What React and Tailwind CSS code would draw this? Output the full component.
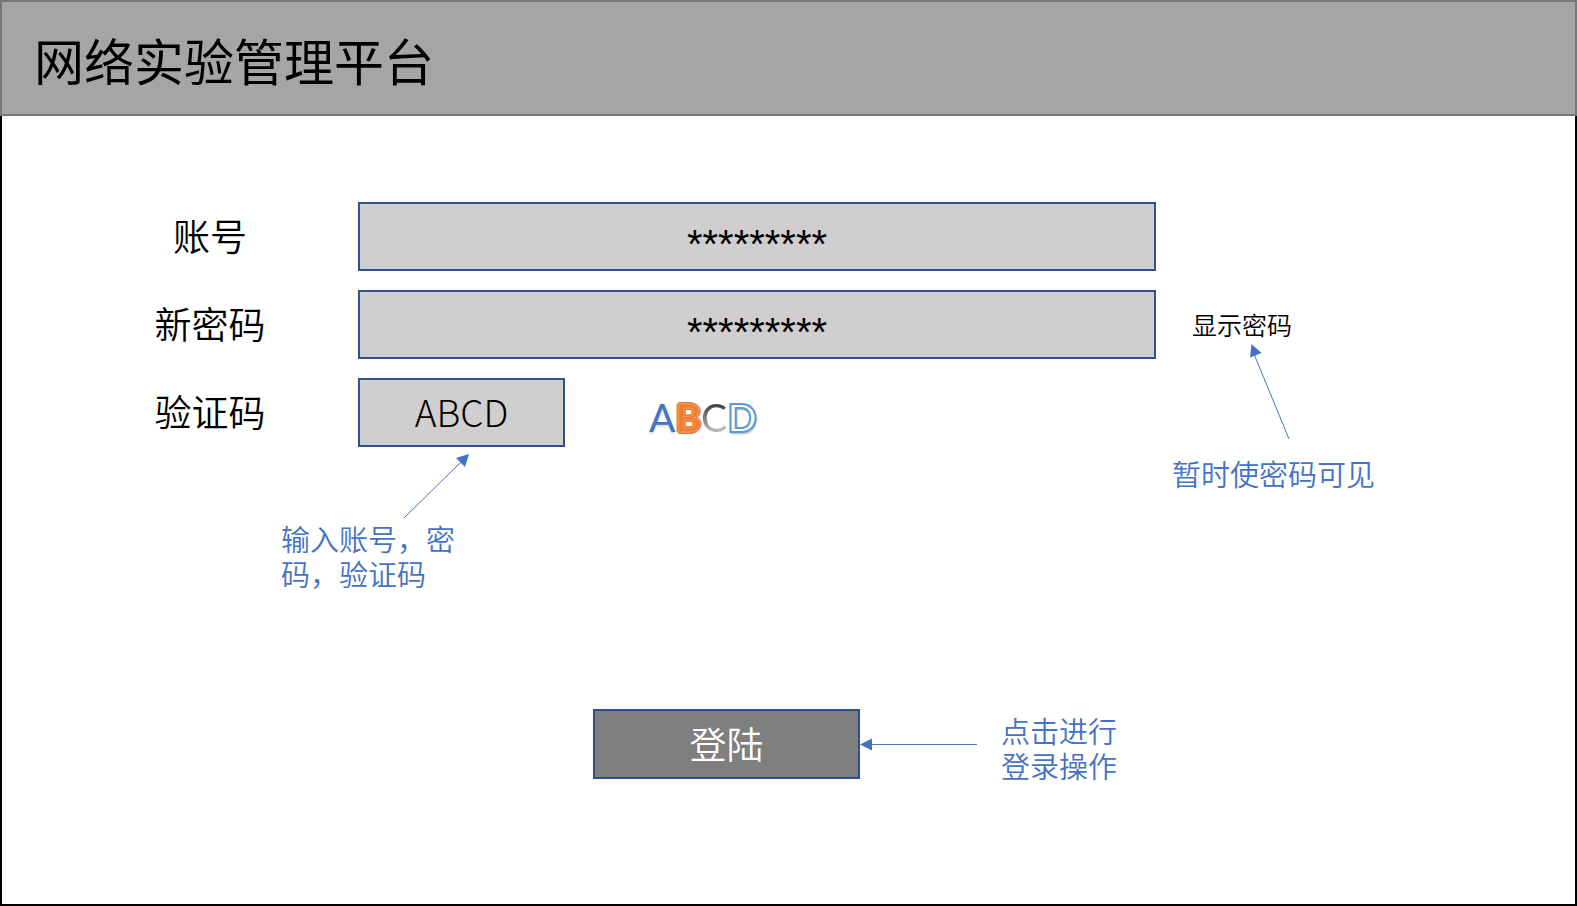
const field =
  "col-start-2 h-[69px] border-2 border-[#2f528f] bg-[#d0cece] px-4 text-center leading-none text-black outline-none";
const masked = "pt-4 font-['Liberation_Sans',sans-serif] text-[40px] font-normal";
const note = "text-[29px] leading-[35px] text-[#4472c4]";

function Label({ id, children }) {
  return (
    <label htmlFor={id} className="col-start-1 flex items-center justify-center pb-0.5 pl-15 text-[37px] leading-none">
      {children}
    </label>
  );
}

function Captcha() {
  return (
    <div aria-label="验证码图片" className="flex items-center pt-2.5 font-['Lato',sans-serif] text-[39px] leading-none">
      <span className="font-normal text-[#4472c4] [text-shadow:0_2px_2px_rgba(0,0,0,0.15)]">A</span>
      <span className="font-bold text-[#ed7d31] [-webkit-text-stroke:1px_#f19a5e] [text-shadow:2px_0_#ed7d31,-2px_0_#ed7d31,0_2px_#ed7d31,0_-2px_#ed7d31,1px_1px_#ed7d31,-1px_1px_#ed7d31,1px_-1px_#ed7d31,-1px_-1px_#ed7d31]">
        B
      </span>
      <span className="bg-linear-to-b from-[#44464a] from-20% to-[#b4b5b8] to-80% bg-clip-text font-normal text-transparent">C</span>
      <span className="font-bold text-white [-webkit-text-stroke:2px_#5b9bd5] [text-shadow:1px_2px_2px_rgba(0,0,0,0.3)]">D</span>
    </div>
  );
}

export default function App() {
  return (
    <div className="flex min-h-screen flex-col bg-black font-['Noto_Sans_CJK_SC',sans-serif] font-[350] text-black">
      <header className="flex h-[116px] items-center border-2 border-[#787878] bg-[#a5a5a5] px-8 pt-0.5">
        <h1 className="text-[50px] leading-none font-normal">网络实验管理平台</h1>
      </header>
      <main className="flex grow flex-col border-x-2 border-b-2 border-black bg-white pt-[86px]">
        <form className="flex flex-col" onSubmit={(e) => e.preventDefault()}>
          <div className="grid grid-cols-[356px_minmax(0,1fr)_419px] gap-y-[19px]">
            <Label id="account">账号</Label>
            <input id="account" type="text" defaultValue="*********" className={`${field} ${masked}`} />

            <Label id="password">新密码</Label>
            <input id="password" type="text" defaultValue="*********" className={`${field} ${masked}`} />

            <div className="col-start-3 row-span-3 row-start-2 flex flex-col items-start pl-9">
              <button type="button" className="h-[54px] pt-3.5 text-[25px] leading-none">
                显示密码
              </button>
              <svg className="ml-14 h-[98px] w-[44px]" viewBox="0 0 44 98" aria-hidden="true">
                <path d="M6 10 L41 95" stroke="#4472c4" fill="none" />
                <path d="M3.5 0 L13.5 9 L2 13.5 Z" fill="#4472c4" />
              </svg>
              <p className={`mt-3.5 -ml-5 ${note}`}>暂时使密码可见</p>
            </div>

            <Label id="captcha">验证码</Label>
            <div className="col-start-2 flex items-center gap-[84px]">
              <input id="captcha" type="text" defaultValue="ABCD" className={`${field} w-[207px] pb-1 text-[37px] font-light`} />
              <Captcha />
            </div>

            <div className="col-span-2 col-start-1 -mt-3 pl-[279px]">
              <svg className="ml-[122px] h-[66px] w-[68px]" viewBox="0 0 68 66" aria-hidden="true">
                <path d="M1 64 L58 8" stroke="#4472c4" fill="none" />
                <path d="M66 0 L53 4 L62 13 Z" fill="#4472c4" />
              </svg>
              <p className={`mt-px w-[184px] ${note}`}>输入账号，密码，验证码</p>
            </div>
          </div>

          <div className="mt-[114px] flex items-center pl-[591px]">
            <button type="submit" className="h-[70px] w-[267px] border-2 border-[#2f528f] bg-[#7f7f7f] pb-0.5 text-[37px] leading-none text-white">
              登陆
            </button>
            <svg className="h-[14px] w-[117px]" viewBox="0 0 117 14" aria-hidden="true">
              <path d="M10 7.5 H117" stroke="#4472c4" fill="none" />
              <path d="M0 7.5 L12 1.5 V13.5 Z" fill="#4472c4" />
            </svg>
            <p className={`ml-6 w-[120px] pt-2 ${note}`}>点击进行登录操作</p>
          </div>
        </form>
      </main>
    </div>
  );
}
